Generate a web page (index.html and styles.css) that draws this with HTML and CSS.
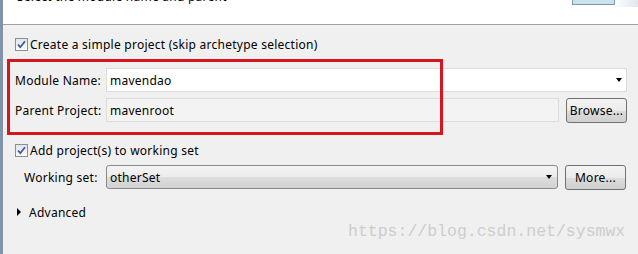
FILE: index.html
```html
<!DOCTYPE html>
<html lang="en">
<head>
  <meta charset="UTF-8"/>
  <title>New Maven Module</title>
  <link rel="stylesheet" href="styles.css">
</head>
<body>
  <div class="frame">
    <!-- banner -->
    <div class="banner">
      <span class="banner-title">Select the module name and parent</span>
      <span class="banner-art"><span class="banner-icon"></span></span>
    </div>

    <div class="panel">
      <div class="check-row">
        <span class="check"><svg width="13" height="13" viewBox="0 0 13 13"><path d="M3 6.5 L5.3 9.2 L10 3.2" fill="none" stroke="#3f5a96" stroke-width="1.8"/></svg></span>
        <span>Create a simple project (skip archetype selection)</span>
      </div>

      <div class="group">
        <div class="field-row">
          <span class="field-label">Module Name:</span>
          <div class="combo-edit">
            <span class="value">mavendao</span>
            <span class="arrow"></span>
          </div>
        </div>
        <div class="field-row">
          <span class="field-label">Parent Project:</span>
          <div class="text-readonly"><span class="value">mavenroot</span></div>
          <button class="btn">Browse...</button>
        </div>
      </div>

      <div class="check-row add-row">
        <span class="check"><svg width="13" height="13" viewBox="0 0 13 13"><path d="M3 6.5 L5.3 9.2 L10 3.2" fill="none" stroke="#3f5a96" stroke-width="1.8"/></svg></span>
        <span>Add project(s) to working set</span>
      </div>

      <div class="field-row working-row">
        <span class="field-label">Working set:</span>
        <div class="combo-drop">
          <span class="value">otherSet</span>
          <span class="arrow"></span>
        </div>
        <button class="btn">More...</button>
      </div>

      <div class="advanced-row">
        <span class="twisty"></span>
        <span>Advanced</span>
      </div>
    </div>

    <!-- annotation + watermark on top of the dialog -->
    <div class="highlight"></div>
    <div class="watermark">https://blog.csdn.net/sysmwx</div>
  </div>
</body>
</html>
```

FILE: styles.css
```css
* { box-sizing: border-box; }
body { margin: 0; background: #f0f0f0; font-family: "Noto Sans", sans-serif; font-size: 12px; letter-spacing: 0.25px; color: #000; }
.frame { position: relative; width: 638px; height: 254px; overflow: hidden; border-left: 3px solid #8193a9; background: #f0f0f0; }

.banner { height: 25px; background: #fff; border-bottom: 1px solid #a0a0a0; display: flex; justify-content: space-between; align-items: flex-start; }
.banner-title { margin: -11px 0 0 14px; font-size: 12px; line-height: 16px; }
.banner-art { width: 66px; height: 7px; display: flex; background: linear-gradient(to right, #fff 0, #fff 42px, #dfe7ee 100%); }
.banner-icon { width: 43px; height: 5px; background: #c9e2ee; border: 1px solid #7d98ab; border-top: none; }

.panel { padding: 9px 11px 0 12px; }

.check-row { height: 20px; display: flex; align-items: center; gap: 2px; }
.check { width: 13px; height: 13px; border: 1px solid #8e8f8f; background: linear-gradient(#dfe6ee, #fbfbfb); display: flex; }
.check svg { margin: -1px; }
.add-row { margin-top: 18px; }

.group { margin-top: 14px; display: flex; flex-direction: column; gap: 6px; }
.field-row { height: 24px; display: flex; align-items: center; }
.field-label { width: 91px; flex: none; }
.value { padding-left: 3px; }

.combo-edit { flex: 1; height: 24px; display: flex; align-items: center; justify-content: space-between; background: #fff; border: 1px solid #dcdcdc; }
.combo-edit .arrow { margin-right: 4px; }
.arrow { width: 0; height: 0; border-left: 3.5px solid transparent; border-right: 3.5px solid transparent; border-top: 4px solid #000; }

.text-readonly { width: 453px; height: 24px; display: flex; align-items: center; background: #f3f3f3; border: 1px solid #dcdcdc; }
.btn { width: 61px; height: 25px; margin-left: 7px; padding: 0; font: inherit; letter-spacing: inherit; color: #000; border: 1px solid #707070; border-radius: 3px; background: linear-gradient(#f4f4f4, #ebebeb 50%, #dddddd 50%, #cfcfcf); }

.working-row { margin-top: 5px; }
.working-row .field-label { padding-left: 9px; }
.combo-drop { width: 452px; height: 24px; display: flex; align-items: center; justify-content: space-between; border: 1px solid #8a8a8a; border-radius: 3px; background: linear-gradient(#f4f4f4, #ebebeb 50%, #dddddd 50%, #d2d2d2); }
.combo-drop .arrow { margin-right: 5px; }

.advanced-row { margin-top: 15px; height: 16px; display: flex; align-items: center; gap: 8px; padding-left: 2px; }
.twisty { width: 0; height: 0; border-top: 4px solid transparent; border-bottom: 4px solid transparent; border-left: 4px solid #000; }

.highlight { position: absolute; left: 4px; top: 59px; width: 436px; height: 76px; border: 3px solid #d5161d; }
.watermark { position: absolute; left: 345px; top: 222px; font-family: "Liberation Mono", monospace; font-size: 16.5px; letter-spacing: 0; color: #cdcdcd; }
```
